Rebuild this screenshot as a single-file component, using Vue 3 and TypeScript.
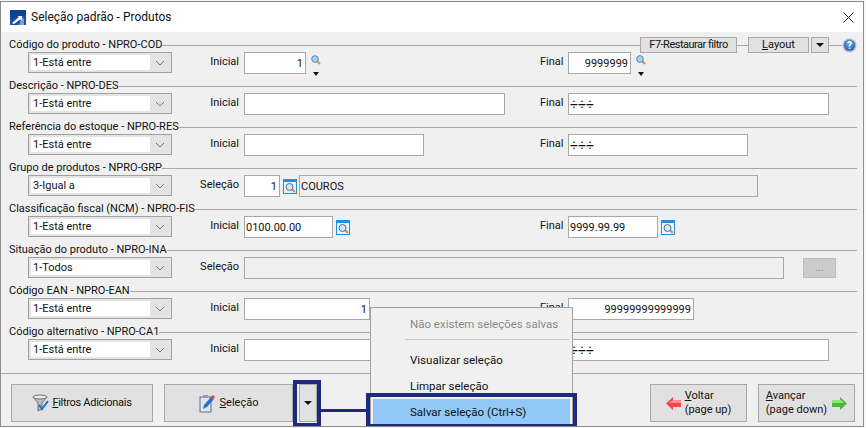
<script setup lang="ts">
interface Row {
  label: string
  mode: string
  leftLabel: string
  leftValue: string
  leftWidth: number
  leftRight?: boolean
  leftIcon?: 'small' | 'big'
  readonly?: string
  readonlyWidth?: number
  disabledBtn?: boolean
  rightValue?: string
  rightWidth?: number
  rightRight?: boolean
  rightIcon?: 'small' | 'big'
}

const rows: Row[] = [
  { label: 'Código do produto - NPRO-COD', mode: '1-Está entre', leftLabel: 'Inicial', leftValue: '1', leftWidth: 62, leftRight: true, leftIcon: 'small', rightValue: '9999999', rightWidth: 63, rightRight: true, rightIcon: 'small' },
  { label: 'Descrição - NPRO-DES', mode: '1-Está entre', leftLabel: 'Inicial', leftValue: '', leftWidth: 261, rightValue: '÷÷÷', rightWidth: 261 },
  { label: 'Referência do estoque - NPRO-RES', mode: '1-Está entre', leftLabel: 'Inicial', leftValue: '', leftWidth: 180, rightValue: '÷÷÷', rightWidth: 180 },
  { label: 'Grupo de produtos - NPRO-GRP', mode: '3-Igual a', leftLabel: 'Seleção', leftValue: '1', leftWidth: 36, leftRight: true, leftIcon: 'big', readonly: 'COUROS', readonlyWidth: 459 },
  { label: 'Classificação fiscal (NCM) - NPRO-FIS', mode: '1-Está entre', leftLabel: 'Inicial', leftValue: '0100.00.00', leftWidth: 89, leftIcon: 'big', rightValue: '9999.99.99', rightWidth: 90, rightIcon: 'big' },
  { label: 'Situação do produto - NPRO-INA', mode: '1-Todos', leftLabel: 'Seleção', leftValue: '', leftWidth: 0, readonly: '', readonlyWidth: 540, disabledBtn: true },
  { label: 'Código EAN - NPRO-EAN', mode: '1-Está entre', leftLabel: 'Inicial', leftValue: '1', leftWidth: 126, leftRight: true, rightValue: '99999999999999', rightWidth: 126, rightRight: true },
  { label: 'Código alternativo - NPRO-CA1', mode: '1-Está entre', leftLabel: 'Inicial', leftValue: '', leftWidth: 261, rightValue: '÷÷÷', rightWidth: 261 },
]
</script>

<template>
  <div class="win">
    <header class="title">
      <svg class="logo" width="16" height="15" viewBox="0 0 16 15">
        <rect width="16" height="15" fill="#1c4fa8" />
        <path d="M0 0h16v5L0 9z" fill="#0f3f97" />
        <path d="M9 15l3-8 2 2v6z" fill="#7f9fd0" />
        <path d="M2 13l7-6-2-1h5v5l-1.500-1.700L4 14z" fill="#fff" />
      </svg>
      <span class="title-text">Seleção padrão - Produtos</span>
      <svg class="close" width="11" height="11" viewBox="0 0 11 11">
        <path d="M.5.5l10 10M10.500.5l-10 10" stroke="#222" stroke-width="1" fill="none" />
      </svg>
    </header>

    <main class="body">
      <section class="rows">
        <div v-for="(r, i) in rows" :key="r.label" class="row">
          <div class="head">
            <span class="head-label">{{ r.label }}</span>
            <span class="rule"></span>
            <template v-if="i === 0">
              <button class="tool f7">F7-Restaurar filtro</button>
              <span class="rule short"></span>
              <button class="tool layout"><u>L</u>ayout</button>
              <button class="tool mini"><i class="caret"></i></button>
              <span class="rule tail"></span>
              <svg class="help" width="15" height="15" viewBox="0 0 15 15">
                <defs>
                  <radialGradient id="hb" cx="50%" cy="35%" r="65%">
                    <stop offset="0" stop-color="#6fb0ee" />
                    <stop offset="1" stop-color="#1f5fb0" />
                  </radialGradient>
                </defs>
                <circle cx="7.500" cy="7.500" r="7" fill="#b8bcc4" />
                <circle cx="7.500" cy="7.200" r="5.600" fill="url(#hb)" />
                <text x="7.500" y="11" class="help-q">?</text>
              </svg>
            </template>
          </div>
          <div class="controls">
            <div class="select">
              <span class="select-val">{{ r.mode }}</span>
              <svg class="chev" width="10" height="6" viewBox="0 0 10 6">
                <path d="M1 1l4 4 4-4" fill="none" stroke="#777" stroke-width="1" />
              </svg>
            </div>
            <span class="lbl">{{ r.leftLabel }}</span>
            <div class="left-group">
              <span v-if="r.leftWidth" class="field" :class="{ right: r.leftRight }" :style="{ width: r.leftWidth + 'px' }">{{ r.leftValue }}</span>
              <span v-if="r.leftIcon === 'small'" class="small-icon">
                <svg width="10" height="10" viewBox="0 0 10 10">
                  <path d="M6 6l3 3" stroke="#e8893a" stroke-width="2" />
                  <circle cx="4" cy="4" r="3.300" fill="#a9d4f2" stroke="#4c88b8" />
                </svg>
                <i class="caret"></i>
              </span>
              <svg v-if="r.leftIcon === 'big'" class="big-icon" width="14" height="15" viewBox="0 0 14 15">
                <rect x=".5" y=".5" width="13" height="14" fill="#e9f3fb" stroke="#1e8ee6" />
                <rect x="1" y="1" width="12" height="2" fill="#1e8ee6" />
                <path d="M8 9l4 4" stroke="#e8893a" stroke-width="2" />
                <circle cx="6.500" cy="8" r="3.500" fill="#cfe6f5" stroke="#5a6f80" />
              </svg>
              <span v-if="r.readonly !== undefined" class="field ro" :style="{ width: r.readonlyWidth + 'px' }">{{ r.readonly }}</span>
              <span v-if="r.disabledBtn" class="dots">...</span>
            </div>
            <template v-if="r.rightValue">
              <span class="lbl-final">Final</span>
              <span class="field" :class="{ right: r.rightRight, any: r.rightValue === '÷÷÷' }" :style="{ width: r.rightWidth + 'px' }">{{ r.rightValue }}</span>
              <span v-if="r.rightIcon === 'small'" class="small-icon">
                <svg width="10" height="10" viewBox="0 0 10 10">
                  <path d="M6 6l3 3" stroke="#e8893a" stroke-width="2" />
                  <circle cx="4" cy="4" r="3.300" fill="#a9d4f2" stroke="#4c88b8" />
                </svg>
                <i class="caret"></i>
              </span>
              <svg v-if="r.rightIcon === 'big'" class="big-icon" width="14" height="15" viewBox="0 0 14 15">
                <rect x=".5" y=".5" width="13" height="14" fill="#e9f3fb" stroke="#1e8ee6" />
                <rect x="1" y="1" width="12" height="2" fill="#1e8ee6" />
                <path d="M8 9l4 4" stroke="#e8893a" stroke-width="2" />
                <circle cx="6.500" cy="8" r="3.500" fill="#cfe6f5" stroke="#5a6f80" />
              </svg>
            </template>
          </div>
        </div>
      </section>

      <footer class="foot">
        <button class="btn filtros">
          <svg width="17" height="18" viewBox="0 0 17 18">
            <path d="M1 3h14l-5 6v6l-4 2V9z" fill="#b9bdc2" stroke="#6f7378" />
            <ellipse cx="8" cy="3" rx="7" ry="2" fill="#e8eaec" stroke="#6f7378" />
            <path d="M7 11l3 4 6-8" fill="none" stroke="#1f6fd0" stroke-width="2" />
          </svg>
          <span class="tight"><u>F</u>iltros Adicionais</span>
        </button>
        <button class="btn selecao">
          <svg width="17" height="19" viewBox="0 0 17 19">
            <rect x="1" y="3" width="11" height="15" fill="#dfe6ee" stroke="#55708f" />
            <rect x="4" y="1" width="5" height="3" fill="#8ea0b4" />
            <path d="M4 15l1-4 7-8 3 2-7 8z" fill="#2c72c4" />
            <path d="M12 3l2-2 2 2-2 2z" fill="#d8442e" />
          </svg>
          <span><u>S</u>eleção</span>
        </button>
        <button class="btn drop"><i class="caret"></i></button>
        <button class="btn nav voltar">
          <svg width="15" height="13" viewBox="0 0 15 13">
            <path d="M0 6.500L7 0v3h8v7H7v3z" fill="#f2454d" />
            <path d="M7 3h8v3H3z" fill="#ff8f93" />
          </svg>
          <span class="nav-text"><u>V</u>oltar<br />(page up)</span>
        </button>
        <button class="btn nav avancar">
          <span class="nav-text"><u>A</u>vançar<br />(page down)</span>
          <svg width="15" height="13" viewBox="0 0 15 13">
            <path d="M15 6.500L8 0v3H0v7h8v3z" fill="#4fb53a" />
            <path d="M0 3h8v-1l4 4H0z" fill="#93e27e" />
          </svg>
        </button>
      </footer>
    </main>

    <div class="menu">
      <div class="item off">Não existem seleções salvas</div>
      <div class="sep"></div>
      <div class="item">Visualizar seleção</div>
      <div class="item">Limpar seleção</div>
      <div class="item hot">Salvar seleção (Ctrl+S)</div>
    </div>
    <div class="mark mark-drop"></div>
    <div class="mark mark-item"></div>
    <div class="mark-line"></div>
  </div>
</template>

<style scoped>
.win {
  position: relative;
  box-sizing: border-box;
  width: 864px;
  height: 426px;
  margin-top: 1px;
  border: 1px solid #8c8c8c;
  background: #f0f0f0;
  display: flex;
  flex-direction: column;
  overflow: hidden;
  font: 11px/14px Roboto, sans-serif;
  color: #111;
}
.title {
  height: 30px;
  flex: none;
  background: #fff;
  display: flex;
  align-items: center;
  padding: 0 8px 0 9px;
  font-size: 12px;
}
.logo { margin-right: 5px; }
.title-text { flex: 1; }
.close { margin-right: 1px; }
.body {
  flex: 1;
  display: flex;
  flex-direction: column;
  min-height: 0;
}
.rows { padding: 6px 6px 0 8px; }
.row { height: 41px; }
.head {
  height: 14px;
  display: flex;
  align-items: center;
}
.head-label { white-space: nowrap; }
.rule {
  flex: 1;
  height: 1px;
  background: #a8a8a8;
}
.row:nth-child(even) .rule { margin-top: 1px; }
.rule.short { flex: none; width: 11px; }
.rule.tail { flex: none; width: 13px; }
.tool {
  box-sizing: border-box;
  height: 16px;
  padding: 0;
  flex: none;
  border: 1px solid #a8a8a8;
  background: #e1e1e1;
  font: inherit;
  color: inherit;
  white-space: nowrap;
  display: flex;
  align-items: center;
  justify-content: center;
}
.f7 { width: 97px; letter-spacing: -0.5px; }
.layout { width: 61px; margin-right: 2px; }
.mini { width: 18px; }
.help { flex: none; }
.help-q {
  font: bold 10px Roboto, sans-serif;
  fill: #fff;
  text-anchor: middle;
}
.caret {
  display: block;
  width: 0;
  height: 0;
  border-left: 4px solid transparent;
  border-right: 4px solid transparent;
  border-top: 4px solid #111;
}
.controls {
  display: flex;
  align-items: flex-start;
  padding-left: 19px;
}
.select {
  box-sizing: border-box;
  width: 144px;
  height: 21px;
  flex: none;
  border: 1px solid #a0a0a0;
  background: #e4e4e4;
  padding: 2px 0 2px 2px;
  display: flex;
  align-items: center;
}
.select-val {
  width: 119px;
  height: 15px;
  flex: none;
  background: #fff;
  line-height: 15px;
  text-indent: 2px;
}
.chev { margin-left: 5px; }
.lbl {
  width: 72px;
  flex: none;
  text-align: right;
  padding-right: 5px;
  box-sizing: border-box;
  line-height: 20px;
}
.left-group {
  width: 296px;
  flex: none;
  display: flex;
  align-items: flex-start;
}
.lbl-final {
  width: 28px;
  flex: none;
  line-height: 20px;
}
.field {
  box-sizing: border-box;
  height: 22px;
  flex: none;
  display: block;
  border: 1px solid #a8a8a8;
  background: #fff;
  padding: 0 2px 0 1px;
  line-height: 21px;
  white-space: nowrap;
  overflow: hidden;
}
.field.right { text-align: right; }
.field.any { font-size: 14px; }
.field.ro { background: #f0f0f0; margin-left: 2px; }
.left-group > .field.ro:first-child { margin-left: 0; }
.small-icon {
  flex: none;
  display: flex;
  flex-direction: column;
  align-items: center;
  margin: 3px 0 0 5px;
  width: 10px;
}
.small-icon .caret {
  margin-top: 7px;
  border-left-width: 3px;
  border-right-width: 3px;
}
.big-icon { flex: none; margin: 4px 0 0 3px; }
.dots {
  box-sizing: border-box;
  width: 33px;
  height: 20px;
  flex: none;
  margin: 1px 0 0 19px;
  border: 1px solid #bdbdbd;
  background: #cccccc;
  color: #8a8a8a;
  text-align: center;
  line-height: 18px;
}
.foot {
  margin-top: auto;
  border-top: 1px solid #a8a8a8;
  height: 53px;
  box-sizing: border-box;
  padding: 10px 8px 0 10px;
  display: flex;
  align-items: flex-start;
}
.btn {
  box-sizing: border-box;
  height: 38px;
  flex: none;
  border: 1px solid #a8a8a8;
  background: #e1e1e1;
  font: inherit;
  color: inherit;
  padding: 0;
  display: flex;
  align-items: center;
  justify-content: center;
}
.filtros { width: 142px; gap: 3px; margin-right: 11px; }
.tight { letter-spacing: -0.3px; }
.selecao { width: 129px; gap: 4px; margin-right: 6px; }
.drop { width: 18px; }
.nav { width: 97px; text-align: left; }
.voltar { margin-left: auto; margin-right: 11px; gap: 4px; }
.avancar { gap: 5px; }
.nav-text { line-height: 14px; white-space: nowrap; }
.menu {
  position: absolute;
  left: 369px;
  top: 305px;
  box-sizing: border-box;
  width: 203px;
  height: 125px;
  background: #f0f0f0;
  border: 1px solid #a0a0a0;
  padding: 3px 2px 0;
  font-size: 11.5px;
}
.item {
  height: 26px;
  line-height: 26px;
  padding-left: 37px;
  white-space: nowrap;
}
.item.off { color: #8a8a8a; }
.item.hot { background: #90c8f6; }
.sep {
  height: 1px;
  background: #c8c8c8;
  margin: 2px 1px 7px 32px;
}
.mark {
  position: absolute;
  box-sizing: border-box;
  border: 4px solid #1f2a7f;
  pointer-events: none;
}
.mark-drop { left: 292px; top: 378px; width: 28px; height: 47px; }
.mark-item { left: 365px; top: 391px; width: 211px; height: 35px; }
.mark-line {
  position: absolute;
  left: 319px;
  top: 407px;
  width: 47px;
  height: 3px;
  background: #1f2a7f;
}
</style>

<style>
html, body { background: #f6f6f6; }
</style>
